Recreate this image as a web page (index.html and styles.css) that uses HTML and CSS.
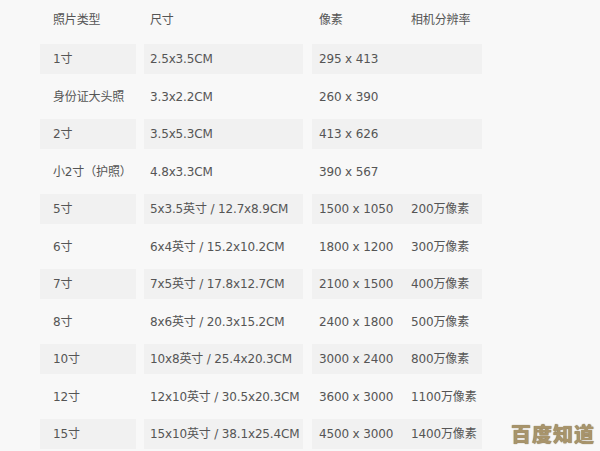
FILE: index.html
```html
<!DOCTYPE html>
<html lang="zh-CN">
<head>
<meta charset="utf-8">
<link rel="stylesheet" href="styles.css">
</head>
<body>
<div class="sheet">
  <div class="row head">
    <div class="c c1">照片类型</div><div class="c c2">尺寸</div><div class="c c3">像素</div><div class="c c4">相机分辨率</div>
  </div>
  <div class="row odd"><div class="c c1">1寸</div><div class="c c2">2.5x3.5CM</div><div class="c c3">295 x 413</div><div class="c c4"></div></div>
  <div class="row"><div class="c c1">身份证大头照</div><div class="c c2">3.3x2.2CM</div><div class="c c3">260 x 390</div><div class="c c4"></div></div>
  <div class="row odd"><div class="c c1">2寸</div><div class="c c2">3.5x5.3CM</div><div class="c c3">413 x 626</div><div class="c c4"></div></div>
  <div class="row"><div class="c c1">小2寸（护照）</div><div class="c c2">4.8x3.3CM</div><div class="c c3">390 x 567</div><div class="c c4"></div></div>
  <div class="row odd"><div class="c c1">5寸</div><div class="c c2">5x3.5英寸 / 12.7x8.9CM</div><div class="c c3">1500 x 1050</div><div class="c c4">200万像素</div></div>
  <div class="row"><div class="c c1">6寸</div><div class="c c2">6x4英寸 / 15.2x10.2CM</div><div class="c c3">1800 x 1200</div><div class="c c4">300万像素</div></div>
  <div class="row odd"><div class="c c1">7寸</div><div class="c c2">7x5英寸 / 17.8x12.7CM</div><div class="c c3">2100 x 1500</div><div class="c c4">400万像素</div></div>
  <div class="row"><div class="c c1">8寸</div><div class="c c2">8x6英寸 / 20.3x15.2CM</div><div class="c c3">2400 x 1800</div><div class="c c4">500万像素</div></div>
  <div class="row odd"><div class="c c1">10寸</div><div class="c c2">10x8英寸 / 25.4x20.3CM</div><div class="c c3">3000 x 2400</div><div class="c c4">800万像素</div></div>
  <div class="row"><div class="c c1">12寸</div><div class="c c2">12x10英寸 / 30.5x20.3CM</div><div class="c c3">3600 x 3000</div><div class="c c4">1100万像素</div></div>
  <div class="row odd"><div class="c c1">15寸</div><div class="c c2">15x10英寸 / 38.1x25.4CM</div><div class="c c3">4500 x 3000</div><div class="c c4">1400万像素</div></div>
</div>
<div class="mark">百度知道</div>
</body>
</html>
```
FILE: styles.css
```css
html, body {
  margin: 0;
  padding: 0;
  background: #f8f8f8;
}
body {
  width: 600px;
  height: 451px;
  overflow: hidden;
  position: relative;
  font-family: "DejaVu Sans", "Noto Sans CJK SC", sans-serif;
  font-size: 12px;
  letter-spacing: -0.15px;
  color: #555;
}
.sheet {
  display: flex;
  flex-direction: column;
  gap: 7.5px;
  padding: 5px 0 0 40px;
}
.row {
  display: flex;
  height: 30px;
}
.row.head {
  margin-bottom: 1.5px;
}
.c {
  height: 30px;
  line-height: 30px;
  white-space: nowrap;
  box-sizing: border-box;
}
.c1 { width: 96px; margin-right: 8px; padding-left: 13px; }
.c2 { width: 159px; margin-right: 9px; padding-left: 6px; }
.c3 { width: 90px; padding-left: 7px; }
.c4 { width: 80px; padding-left: 9px; }
.row.odd .c { background: #f1f1f1; }
.mark {
  position: absolute;
  left: 511px;
  top: 420px;
  font-family: "Noto Sans CJK SC", sans-serif;
  font-weight: 900;
  font-size: 20px;
  letter-spacing: 1px;
  line-height: 28px;
  color: #a8946b;
  text-shadow: 0 0 1px #6b5a3a;
}
```
